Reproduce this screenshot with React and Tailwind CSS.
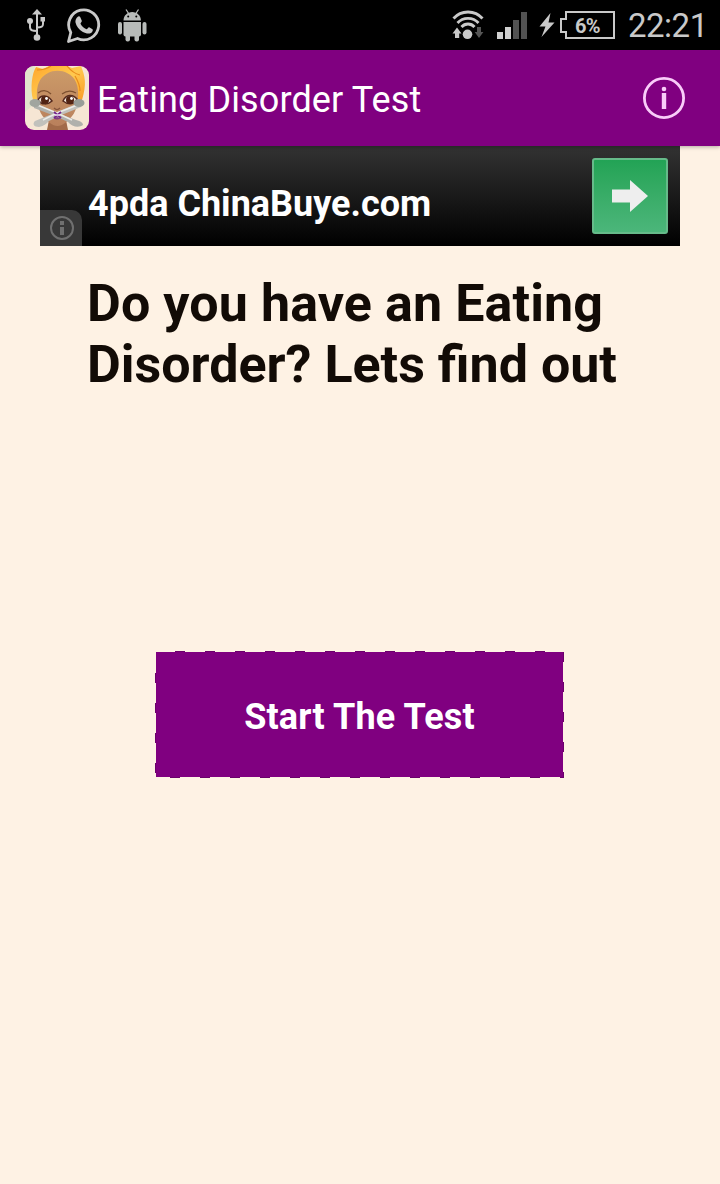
import React from 'react';

const UsbIcon = () => (
  <svg width="20" height="34" viewBox="0 0 20 34" fill="none" stroke="#c9c9c9" strokeWidth="2">
    <path d="M10 5v24M3 13v6.500c0 2.500 1.500 3.500 7 3.500M16 11v5c0 2.500-1 3.500-6 3.500" />
    <path d="M10 1l5 5.500H5z" fill="#c9c9c9" stroke="none" />
    <circle cx="3" cy="13" r="3" fill="#c9c9c9" stroke="none" />
    <rect x="13.500" y="9" width="4.500" height="4.500" fill="#c9c9c9" stroke="none" />
    <circle cx="10" cy="29.500" r="3.300" fill="#c9c9c9" stroke="none" />
  </svg>
);

const WhatsAppIcon = () => (
  <svg width="36" height="38" viewBox="0 0 36 38">
    <path
      d="M2.500 35.500l2.300-9A15 15 0 1 1 11.500 32.500z"
      fill="none"
      stroke="#c9c9c9"
      strokeWidth="2.800"
      strokeLinejoin="round"
    />
    <path
      d="M11.500 11c.9-1 2.300-.9 2.800.2l1.500 3.600c.3.800-1.300 2.200-1.300 2.900 1.200 2.500 3.400 4.500 6 5.500.9 0 1.800-2.200 2.700-1.900l3.300 1.900c.9.500-.1 3-1.500 3.700-2.200 1.100-5.200.7-8.500-1.200-3.400-2-6.200-5.700-7-9.200-.5-2.100.7-4.300 2-5.500z"
      fill="#c9c9c9"
    />
  </svg>
);

const AndroidIcon = () => (
  <svg width="30" height="34" viewBox="0 0 30 34" fill="#b8bbb9">
    <path d="M5.500 11.500C5.500 6.500 9.500 3 14.200 3s8.700 3.500 8.700 8.500z" />
    <path d="M8 .5l3 4.500M20.500 .5l-3 4.500" stroke="#b8bbb9" strokeWidth="1.300" />
    <circle cx="10.200" cy="7.500" r="1" fill="#000" />
    <circle cx="18.300" cy="7.500" r="1" fill="#000" />
    <path d="M5.500 13H23v12.500a2 2 0 0 1-2 2H7.500a2 2 0 0 1-2-2z" />
    <rect x="0" y="13" width="4" height="12.500" rx="2" />
    <rect x="24.500" y="13" width="4" height="12.500" rx="2" />
    <rect x="7.500" y="22" width="4.500" height="10.500" rx="2" />
    <rect x="16.500" y="22" width="4.500" height="10.500" rx="2" />
  </svg>
);

const WifiIcon = () => (
  <svg width="32" height="30" viewBox="0 0 32 30">
    <g fill="none" stroke="#c9c9c9" strokeWidth="2.800">
      <path d="M1.500 8.500c7.500-8.700 21.500-8.700 29 0" />
      <path d="M5.500 13c5.500-6.200 15.500-6.200 21 0" />
      <path d="M9.500 17c3.500-4 9.500-4 13 0" />
    </g>
    <circle cx="15.500" cy="24.300" r="4.800" fill="#c9c9c9" />
    <path d="M5 17.500l4.500 6H7.200V28H3v-4.500H.5z" fill="#c9c9c9" />
    <path d="M27 28l-4.300-6H25v-5h4v5h2.400z" fill="#555" />
  </svg>
);

const SignalIcon = () => (
  <svg width="30" height="27" viewBox="0 0 30 27">
    <path d="M0 20h6v7H0zM8 15h6v12H8z" fill="#d0d0d0" />
    <path d="M16 8h6v19h-6zM24 0h6v27h-6z" fill="#525252" />
  </svg>
);

const Battery = () => (
  <div className="relative ml-[5px] h-7 w-[55px]">
    <svg className="absolute inset-0" width="55" height="28" viewBox="0 0 55 28">
      <path d="M6 1h48v26H6v-6H1V8h5z" fill="none" stroke="#c9c9c9" strokeWidth="2" />
    </svg>
    <span className="absolute top-[4px] left-[15px] text-[20px] leading-[22px] font-bold tracking-[-0.8px] text-[#c9c9c9]">
      6%
    </span>
  </div>
);

const StatusBar = () => (
  <div className="flex h-[50px] shrink-0 items-start bg-black">
    <div className="flex pl-[27px]">
      <div className="pt-[8px]"><UsbIcon /></div>
      <div className="pt-[6px] pl-[19px]"><WhatsAppIcon /></div>
      <div className="pt-[9px] pl-[16px]"><AndroidIcon /></div>
    </div>
    <div className="ml-auto flex pr-[13px]">
      <div className="pt-[10px]"><WifiIcon /></div>
      <div className="pt-[12px] pl-[13px]"><SignalIcon /></div>
      <svg className="mt-[13px] ml-[12px]" width="16" height="24" viewBox="0 0 16 24">
        <path d="M11.500 0L.5 13.500h6L2.500 24 15.500 9.500H9.500z" fill="#c9c9c9" />
      </svg>
      <div className="pt-[11px]"><Battery /></div>
      <span className="ml-[13px] w-[79px] pt-[7px] text-[33px] leading-[38px] tracking-[-0.5px] whitespace-nowrap text-[#c9c9c9]">
        22:21
      </span>
    </div>
  </div>
);

const AppLogo = () => (
  <svg width="64" height="64" viewBox="0 0 64 64">
    <defs>
      <clipPath id="logo-clip">
        <rect width="64" height="64" rx="9" />
      </clipPath>
      <linearGradient id="hair" x1="0" y1="0" x2="1" y2="1">
        <stop offset="0" stopColor="#ffa62c" />
        <stop offset="0.500" stopColor="#ffc84e" />
        <stop offset="1" stopColor="#f99a24" />
      </linearGradient>
      <linearGradient id="skin" x1="0" y1="0" x2="0" y2="1">
        <stop offset="0" stopColor="#cb9a68" />
        <stop offset="1" stopColor="#b9805c" />
      </linearGradient>
    </defs>
    <g clipPath="url(#logo-clip)">
      <rect width="64" height="64" fill="#f6e6d4" />
      <path d="M0 0h10L7 40 0 46z" fill="#e2e4cd" />
      {/* hair */}
      <path d="M8 34C5 22 7 7 11 1l7 2 6-3h18l5 2 9-2c4 10 6 18 1 34l-6 2H14z" fill="url(#hair)" />
      <path d="M12 4c7 0 10-1 14-4M42 0c4 5 8 8 13 9M50 10c3 5 5 9 5 15" fill="none" stroke="#e98b1c" strokeWidth="1.200" />
      {/* neck and face */}
      <path d="M22 64l2-10h17l2 10z" fill="#a26a49" />
      <path d="M12 33c-1-15 3-22 11-26 5-3 14-3 19 0 9 4 12 13 11 26-1 12-6 19-13 24-5 4-10 4-15 0C17 52 13 44 12 33z" fill="url(#skin)" />
      {/* brows and eyes */}
      <path d="M13 27c4-3 9-3 13 1M37 28c4-3 9-4 14-1" fill="none" stroke="#7d5030" strokeWidth="1.300" />
      <path d="M13 34c3-6 10-5 14 1-4 4-11 4-14-1zM38 35c3-7 10-7 14-2-3 6-9 6-14 2z" fill="#efe5da" stroke="#54291d" strokeWidth="1.500" />
      <circle cx="20" cy="34" r="4" fill="#512313" />
      <circle cx="45" cy="34" r="4" fill="#512313" />
      <circle cx="21.500" cy="32.500" r="1.400" fill="#fff" />
      <circle cx="46.500" cy="32.500" r="1.400" fill="#fff" />
      <path d="M29 42c2 2 4 2 6 0" fill="none" stroke="#85543b" strokeWidth="1.200" />
      <path d="M25.500 50c3-3.500 10-3.500 13 0-3 4.500-10 4.500-13 0z" fill="#823d80" />
      {/* crossed straps */}
      <path d="M8 36l23 10.500 20 7.500c5 1 7 3 7 5-4 3-11 2-15-3l-13-6L9 42z" fill="#b0b1ac" />
      <path d="M56 36l-24 10-22 9c-3 3-1 6 4 6 5-1 8-4 10-6l10-5 22-9z" fill="#c1c1bc" />
      <path d="M10 38l22 9 15 7M55 38l-23 9-14 7" fill="none" stroke="#ecece8" strokeWidth="1.500" />
      <ellipse cx="10" cy="37" rx="5.500" ry="4" fill="#a1a59f" />
      <ellipse cx="54" cy="37" rx="5.500" ry="4" fill="#989d98" />
      <path d="M29 46l7 6M36 46l-7 6" stroke="#74258a" strokeWidth="1.800" />
      <path d="M30 49h5" stroke="#eee3f5" strokeWidth="1.300" />
    </g>
  </svg>
);

const Header = () => (
  <header className="relative z-10 flex h-24 shrink-0 items-center bg-[#800080] pr-[35px] pl-[25px] shadow-[0_1px_4px_rgba(0,0,0,0.3)]">
    <AppLogo />
    <h1 className="ml-[8px] pt-[4px] text-[36px] leading-[42px] tracking-[0.12px] whitespace-nowrap text-white">
      Eating Disorder Test
    </h1>
    <svg className="ml-auto" width="42" height="42" viewBox="0 0 42 42">
      <circle cx="21" cy="21" r="19.600" fill="none" stroke="#f9ccf9" strokeWidth="2.800" />
      <circle cx="21" cy="12" r="2.300" fill="#f9ccf9" />
      <path d="M18.800 16h4.400v16h-4.400z" fill="#f9ccf9" />
    </svg>
  </header>
);

const AdBanner = () => (
  <div className="relative mx-auto flex h-[100px] w-[640px] items-start bg-linear-to-b/srgb from-[#333] to-black pr-3 pl-12">
    <span className="mt-[37px] text-[36px] leading-[42px] font-bold whitespace-nowrap text-white">4pda ChinaBuye.com</span>
    <div className="mt-3 ml-auto flex h-[76px] w-[76px] items-center justify-center rounded-[3px] border-2 border-[#66bb8a] bg-linear-to-b from-[#22a355] to-[#4bb67a]">
      <svg width="36" height="32" viewBox="0 0 36 32">
        <path d="M0 9.500h18V0l18 16-18 16v-9.500H0z" fill="#eee" />
      </svg>
    </div>
    <div className="absolute bottom-0 left-0 flex h-9 w-[42px] items-center justify-center rounded-tr-[10px] bg-[#383838] pl-[2px]">
      <svg width="24" height="24" viewBox="0 0 24 24">
        <circle cx="12" cy="12" r="11" fill="none" stroke="#707070" strokeWidth="2" />
        <path d="M10 5h4v4h-4zM10 11h4v8h-4z" fill="#707070" />
      </svg>
    </div>
  </div>
);

const StartButton = () => (
  <button className="relative mt-[257px] ml-[156px] flex h-[125px] w-[407px] items-center justify-center bg-[#800080] text-[36px] leading-[42px] font-bold tracking-[0.15px] text-white">
    <span className="pt-[4px]">Start The Test</span>
    {/* dashed outline just outside the fill */}
    <svg className="absolute -top-px -left-px" width="409" height="127" viewBox="0 0 409 127">
      <g stroke="#6b006b" strokeWidth="1" strokeDasharray="10 20">
        <path d="M20 .5h388" />
        <path d="M408.500 1v126" />
        <path d="M405 126.500h4M385 126.500H10" />
        <path d="M.5 22v103" />
      </g>
    </svg>
  </button>
);

const App = () => (
  <div className="flex h-[1184px] w-[720px] flex-col overflow-hidden bg-[#fef2e4] font-['Roboto',sans-serif]">
    <StatusBar />
    <Header />
    <main className="flex flex-col">
      <AdBanner />
      <p className="mt-[27px] pl-[87px] text-[52px] leading-[61px] font-bold whitespace-nowrap text-[#120b06]">
        <span className="tracking-[0.1px]">Do you have an Eating</span>
        <br />
        Disorder? Lets find out
      </p>
      <StartButton />
    </main>
  </div>
);

export default App;
